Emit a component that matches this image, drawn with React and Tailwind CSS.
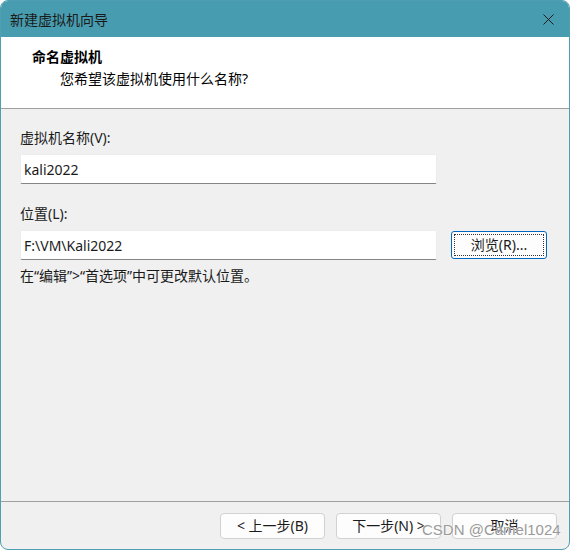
import React from 'react';

const cjk = { fontFamily: '"Noto Sans", "Noto Sans CJK SC", "Microsoft YaHei", sans-serif' };

const WizardButton = ({ children }) => (
  <button
    type="button"
    className="w-[105px] h-[26px] rounded-[4px] border border-[#d1d1d1] bg-[#fdfdfd] text-[14px] leading-none text-[#1b1b1b] flex items-center justify-center"
  >
    {children}
  </button>
);

const App = () => {
  return (
    <div className="w-[570px] h-[550px] relative" style={cjk}>
      <div className="w-full h-full rounded-[8px] border border-[#4d9fb1] overflow-hidden flex flex-col bg-[#f0f0f0]">
        {/* Title bar */}
        <div className="h-[36px] bg-[#489caf] flex items-center justify-between pl-[9px] pr-[15px]">
          <span className="text-[14px] text-[#1a1a1a]">新建虚拟机向导</span>
          <svg width="11" height="11" viewBox="0 0 11 11" className="text-[#1a1a1a]">
            <path d="M0.5 0.5 L10.5 10.5 M10.5 0.5 L0.5 10.5" stroke="currentColor" strokeWidth="1" />
          </svg>
        </div>

        {/* Header */}
        <div className="h-[72px] bg-white border-b border-[#a0a0a0] pl-[31px] pt-[10px]">
          <div className="text-[14px] leading-[20px] font-bold text-black">命名虚拟机</div>
          <div className="text-[14px] leading-[20px] text-black ml-[28px] mt-[2px]">您希望该虚拟机使用什么名称?</div>
        </div>

        {/* Body */}
        <div className="flex-1 pl-[19px] pt-[19px] text-[14px] text-[#1a1a1a]">
          <div className="leading-[20px]">虚拟机名称(V):</div>
          <div className="mt-[6px] w-[417px] h-[30px] bg-white border border-[#ececec] border-b-[#858585] rounded-[2px] flex items-center pl-[3px]">
            kali2022
          </div>

          <div className="leading-[20px] mt-[20px]">位置(L):</div>
          <div className="mt-[6px] flex items-start gap-[14px]">
            <div className="w-[417px] h-[30px] bg-white border border-[#ececec] border-b-[#858585] rounded-[2px] flex items-center pl-[3px]">
              F:\VM\Kali2022
            </div>
            <button
              type="button"
              className="mt-[1px] w-[96px] h-[28px] rounded-[3px] border border-[#0067c0] bg-[#fdfdfd] p-[2px]"
            >
              <span className="w-full h-full flex items-center justify-center border border-dotted border-[#333] text-[14px] leading-none">
                浏览(R)...
              </span>
            </button>
          </div>

          <div className="leading-[20px] mt-[6px]">在“编辑”&gt;“首选项”中可更改默认位置。</div>
        </div>

        {/* Footer */}
        <div className="h-[48px] border-t border-[#a0a0a0] flex justify-end items-start gap-[11px] pt-[11px] pr-[12px]">
          <WizardButton>&lt; 上一步(B)</WizardButton>
          <WizardButton>下一步(N) &gt;</WizardButton>
          <WizardButton>取消</WizardButton>
        </div>
      </div>

      {/* Watermark */}
      <div
        className="absolute left-[422px] top-[520px] text-[15px] leading-[20px] text-[#9a9a9a] whitespace-nowrap"
        style={{ fontFamily: '"Liberation Sans", Arial, sans-serif', textShadow: '0 0 2px #fff, 0 0 1px #fff' }}
      >
        CSDN @Camel1024
      </div>
    </div>
  );
};

export default App;
